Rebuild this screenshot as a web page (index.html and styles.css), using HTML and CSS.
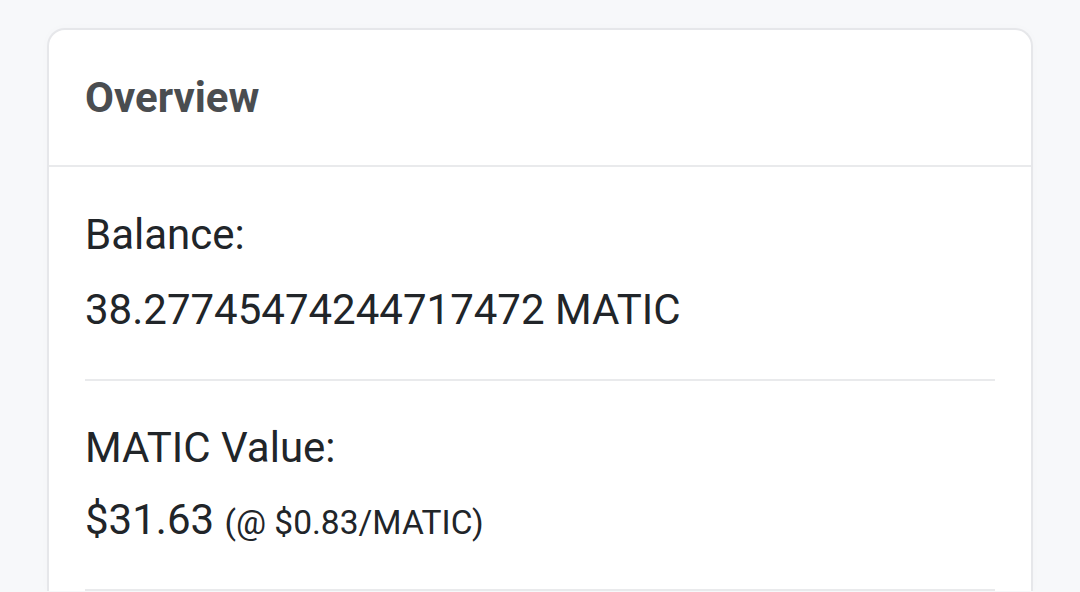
FILE: index.html
```html
<!DOCTYPE html>
<html lang="en">
<head>
    <meta charset="UTF-8">
    <meta name="viewport" content="width=device-width, initial-scale=1.0">
    <title>Overview</title>
    <link rel="stylesheet" href="styles.css">
</head>
<body>
    <div class="card">
        <div class="card-header">Overview</div>
        <div class="card-body">
            <div class="row">
                <div class="label">Balance:</div>
                <div class="value">38.27745474244717472 MATIC</div>
            </div>
            <div class="row row-price">
                <div class="label">MATIC Value:</div>
                <div class="value">$31.63 <span class="rate">(@ $0.83/MATIC)</span></div>
            </div>
        </div>
    </div>
</body>
</html>
```

FILE: styles.css
```css
body {
    font-family: Roboto, "Noto Sans", sans-serif;
    margin: 0;
    padding: 28px 47px 0 47px;
    background: #f7f8fa;
    color: #212529;
}
.card {
    background: #fff;
    border: 2px solid #e6e7ea;
    border-bottom: none;
    border-radius: 18px 18px 0 0;
    box-shadow: 0 0 10px rgba(0, 0, 0, 0.02);
}
.card-header {
    height: 135px;
    display: flex;
    align-items: center;
    padding: 0 36px;
    font-size: 42px;
    font-weight: bold;
    color: #4a4d50;
    border-bottom: 2px solid #e9eaec;
}
.card-body {
    padding: 0 36px;
}
.row {
    padding: 36px 0 38px;
    border-bottom: 2px solid #e9eaec;
}
.label, .value {
    font-size: 42px;
    line-height: 63px;
}
.label {
    margin-bottom: 12px;
}
.row-price {
    padding: 35px 0 38px;
}
.row-price .label {
    margin-bottom: 9px;
}
.rate {
    font-size: 33.5px;
    line-height: 1;
}
```
